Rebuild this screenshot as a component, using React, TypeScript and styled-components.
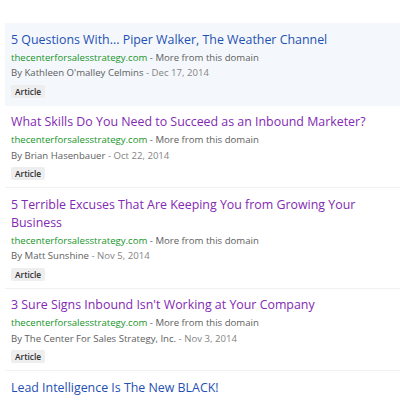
import styled, { createGlobalStyle } from "styled-components";

const GlobalStyle = createGlobalStyle`
  html, body {
    margin: 0;
    padding: 0;
    background: #ffffff;
    overflow: hidden;
  }
  body {
    font-family: "Open Sans", "Liberation Sans", sans-serif;
  }
`;

const Page = styled.div`
  padding: 23px 0 0 5px;
  width: 395px;
  height: 377px;
  overflow: hidden;
`;

const ResultList = styled.ul`
  list-style: none;
  margin: 0;
  padding: 0;
`;

const Result = styled.li<{ $active?: boolean }>`
  padding: 7.5px 6px 7px;
  background: ${(p) => (p.$active ? "#f4f8fc" : "transparent")};
  border-bottom: 1px solid ${(p) => (p.$active ? "transparent" : "#f1f1f1")};
`;

const Title = styled.a<{ $visited?: boolean }>`
  display: block;
  font-size: 12.4px;
  line-height: 18px;
  color: ${(p) => (p.$visited ? "#8329b3" : "#1f50b3")};
  text-decoration: none;
  margin-bottom: 1px;
`;

const MetaLine = styled.div`
  font-size: 9.6px;
  line-height: 15.5px;
  color: #5e5e5e;
  white-space: nowrap;
`;

const Domain = styled.span`
  color: #17952a;
`;

const Date = styled.span`
  color: #858585;
`;

const Badge = styled.span`
  display: block;
  width: fit-content;
  margin-top: 4px;
  padding: 0 4px;
  height: 13px;
  line-height: 13px;
  font-size: 8.4px;
  font-weight: 600;
  color: #2e2e2e;
  background: #eeeeee;
  border-radius: 2px;
`;

type Item = {
  title: string;
  author: string;
  date: string;
  visited?: boolean;
  active?: boolean;
};

const items: Item[] = [
  {
    title: "5 Questions With... Piper Walker, The Weather Channel",
    author: "Kathleen O'malley Celmins",
    date: "Dec 17, 2014",
    active: true,
  },
  {
    title: "What Skills Do You Need to Succeed as an Inbound Marketer?",
    author: "Brian Hasenbauer",
    date: "Oct 22, 2014",
    visited: true,
  },
  {
    title: "5 Terrible Excuses That Are Keeping You from Growing Your Business",
    author: "Matt Sunshine",
    date: "Nov 5, 2014",
    visited: true,
  },
  {
    title: "3 Sure Signs Inbound Isn't Working at Your Company",
    author: "The Center For Sales Strategy, Inc.",
    date: "Nov 3, 2014",
    visited: true,
  },
  {
    title: "Lead Intelligence Is The New BLACK!",
    author: "Matt Sunshine",
    date: "Oct 1, 2014",
  },
];

export default function App() {
  return (
    <>
      <GlobalStyle />
      <Page>
        <ResultList>
          {items.map((item) => (
            <Result key={item.title} $active={item.active}>
              <Title href="#" $visited={item.visited}>
                {item.title}
              </Title>
              <MetaLine>
                <Domain>thecenterforsalesstrategy.com</Domain> - More from this domain
              </MetaLine>
              <MetaLine>
                By {item.author} <Date>- {item.date}</Date>
              </MetaLine>
              <Badge>Article</Badge>
            </Result>
          ))}
        </ResultList>
      </Page>
    </>
  );
}
